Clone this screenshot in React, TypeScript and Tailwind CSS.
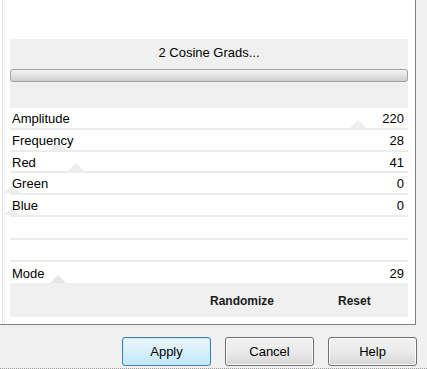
import { ReactNode } from "react"

type Thumb = { left: number; top: number; color?: string }

function Tri({ left, top, color = "#eeeeee" }: Thumb) {
    return (
        <svg className="absolute pointer-events-none" style={{ left, top }} width="16" height="8" viewBox="0 0 16 8">
            <path d="M0 8 L8 0 L16 8 Z" fill={color} />
        </svg>
    )
}

function Row({ label, value, h, thumb, sep = true }: { label?: string; value?: string; h: string; thumb?: Thumb; sep?: boolean }) {
    return (
        <div className={`relative flex items-center justify-between pt-[2px] pl-[2px] pr-[4px] text-[13px] leading-4 text-black ${h} ${sep ? "border-b-2 border-[#ececec]" : ""}`}>
            {thumb && <Tri {...thumb} />}
            <span className="relative">{label}</span>
            <span className="relative">{value}</span>
        </div>
    )
}

function Button({ children, primary }: { children: ReactNode; primary?: boolean }) {
    return (
        <button
            className={
                primary
                    ? "w-[89px] h-[29px] rounded-[3px] border border-[#3c7fb1] bg-gradient-to-b from-[#eaf6fd] via-[#d9f0fc] to-[#bee6fd] text-[13px] text-black shadow-[inset_0_0_0_1px_#cdeaf9]"
                    : "w-[89px] h-[29px] rounded-[3px] border border-[#707070] bg-gradient-to-b from-[#f2f2f2] via-[#ebebeb] to-[#d6d6d6] text-[13px] text-black shadow-[inset_0_0_0_1px_#fcfcfc]"
            }
        >
            {children}
        </button>
    )
}

export default function App() {
    return (
        <div className="w-[427px] h-[369px] bg-[#f0f0f0] flex flex-col border-b border-dotted border-[#9a9a9a]" style={{ fontFamily: '"Liberation Sans", Arial, sans-serif' }}>
            <div className="w-[416px] h-[325px] bg-white border-r border-b border-[#7f7f7f] pl-[2px] flex">
                <div className="flex-1 border-l border-[#e3e3e3] pl-[1px] flex">
                    <div className="flex-1 border-l border-[#efefef] pl-[5px] pr-[7px] flex flex-col">
                        <div className="h-[39px] shrink-0" />

                        <div className="h-[69px] shrink-0 bg-[#f0f0f0] flex flex-col">
                            <div className="pt-[6px] text-center text-[13px] leading-4 text-black">2 Cosine Grads...</div>
                            <div className="mt-[8px] h-[13px] rounded-[3px] border border-[#a3a3a3] bg-gradient-to-b from-[#f3f3f3] via-[#e2e2e2] to-[#cdcdcd]" />
                        </div>

                        <Row label="Amplitude" value="220" h="h-[22px]" thumb={{ left: 340, top: 12 }} />
                        <Row label="Frequency" value="28" h="h-[22px]" thumb={{ left: 40, top: 12 }} />
                        <Row label="Red" value="41" h="h-[21px]" thumb={{ left: 58, top: 11 }} />
                        <Row label="Green" value="0" h="h-[22px]" thumb={{ left: -6, top: 12 }} />
                        <Row label="Blue" value="0" h="h-[22px]" thumb={{ left: -6, top: 12 }} />
                        <Row h="h-[23px]" />
                        <Row h="h-[22px]" />
                        <Row label="Mode" value="29" h="h-[21px]" sep={false} thumb={{ left: 40, top: 13, color: "#e6e6e6" }} />

                        <div className="h-[34px] shrink-0 bg-[#f0f0f0] flex items-center pt-[1px] text-[12px] font-bold text-[#1a1a1a]">
                            <span className="ml-[200px]">Randomize</span>
                            <span className="ml-[64px]">Reset</span>
                        </div>
                    </div>
                </div>
            </div>

            <div className="flex justify-end gap-[14px] pr-[10px] pt-[12px]">
                <Button primary>Apply</Button>
                <Button>Cancel</Button>
                <Button>Help</Button>
            </div>
        </div>
    )
}
